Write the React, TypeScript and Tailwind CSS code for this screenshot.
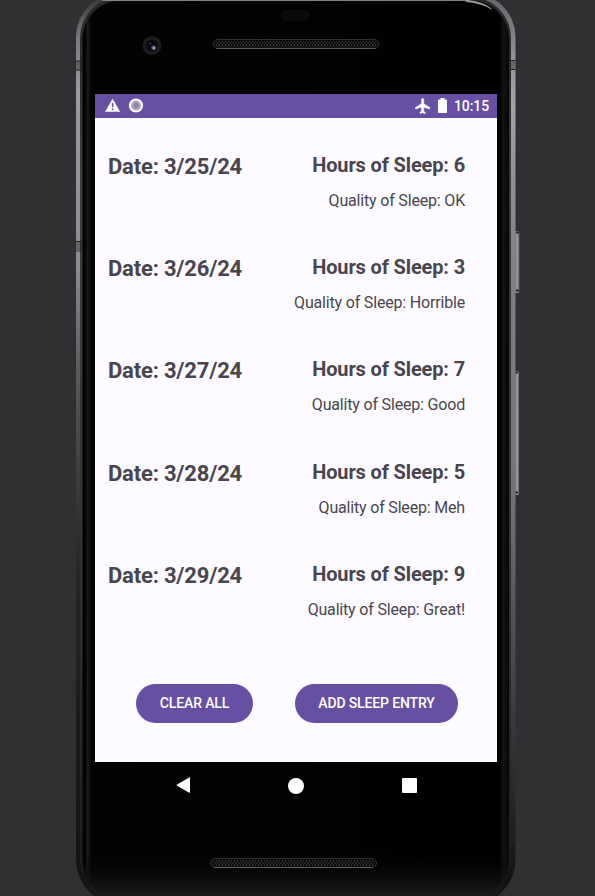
import React from "react";

const entries = [
  { date: "3/25/24", hours: 6, quality: "OK" },
  { date: "3/26/24", hours: 3, quality: "Horrible" },
  { date: "3/27/24", hours: 7, quality: "Good" },
  { date: "3/28/24", hours: 5, quality: "Meh" },
  { date: "3/29/24", hours: 9, quality: "Great!" },
];

function Speaker({ x, y }: { x: number; y: number }) {
  return (
    <g>
      <rect x={x + 0.5} y={y + 0.5} width="166" height="9" rx="4.5" fill="#0c0c0c" stroke="#303030" />
      <rect x={x + 2.5} y={y + 2} width="162" height="6.5" rx="3" fill="url(#mesh)" />
      <path d={`M${x + 4} ${y + 9.5}h159`} stroke="#5c5c5e" />
    </g>
  );
}

function DeviceFrame() {
  return (
    <svg className="absolute inset-0" width="595" height="896" viewBox="0 0 595 896">
      <defs>
        <linearGradient id="rimLeft" x1="0" y1="0" x2="0" y2="896" gradientUnits="userSpaceOnUse">
          <stop offset="0" stopColor="#3a3a3d" />
          <stop offset=".04" stopColor="#77777b" />
          <stop offset=".1" stopColor="#9a9a9f" />
          <stop offset=".3" stopColor="#8a8a8f" />
          <stop offset=".42" stopColor="#58585b" />
          <stop offset=".55" stopColor="#39393b" />
          <stop offset=".65" stopColor="#232324" />
          <stop offset="1" stopColor="#131314" />
        </linearGradient>
        <linearGradient id="rimRight" x1="0" y1="0" x2="0" y2="896" gradientUnits="userSpaceOnUse">
          <stop offset="0" stopColor="#67676b" />
          <stop offset=".07" stopColor="#96969b" />
          <stop offset=".12" stopColor="#a0a0a5" />
          <stop offset=".3" stopColor="#7e7e83" />
          <stop offset=".55" stopColor="#737378" />
          <stop offset=".7" stopColor="#505054" />
          <stop offset=".85" stopColor="#303033" />
          <stop offset="1" stopColor="#0e0e0f" />
        </linearGradient>
        <linearGradient id="inner" x1="0" y1="0" x2="0" y2="896" gradientUnits="userSpaceOnUse">
          <stop offset="0" stopColor="#27272a" />
          <stop offset=".2" stopColor="#3c3c3f" />
          <stop offset=".65" stopColor="#323234" />
          <stop offset="1" stopColor="#1c1c1d" />
        </linearGradient>
        <linearGradient id="glass" x1="82" y1="0" x2="510" y2="0" gradientUnits="userSpaceOnUse">
          <stop offset="0" stopColor="#020202" />
          <stop offset=".008" stopColor="#050505" />
          <stop offset=".013" stopColor="#1a1a1b" />
          <stop offset=".022" stopColor="#030303" />
          <stop offset=".975" stopColor="#000" />
          <stop offset=".985" stopColor="#131314" />
          <stop offset="1" stopColor="#040404" />
        </linearGradient>
        <linearGradient id="chin" x1="0" y1="848" x2="0" y2="896" gradientUnits="userSpaceOnUse">
          <stop offset="0" stopColor="#000" stopOpacity="0" />
          <stop offset="1" stopColor="#1c1c1c" />
        </linearGradient>
        <linearGradient id="key" x1="514" y1="0" x2="520" y2="0" gradientUnits="userSpaceOnUse">
          <stop offset="0" stopColor="#69696c" />
          <stop offset=".6" stopColor="#a09ca2" />
          <stop offset="1" stopColor="#302f31" />
        </linearGradient>
        <pattern id="mesh" width="3" height="4" patternUnits="userSpaceOnUse">
          <path d="M0 0h1v2H0zM1.5 2h1v2h-1z" fill="#343434" />
        </pattern>
      </defs>
      <rect x="513" y="231" width="7" height="62" rx="1.5" fill="url(#key)" />
      <rect x="513" y="371" width="6" height="124" rx="1.5" fill="url(#key)" />
      <path d="M516 232.500h3M516 290.500h3M515 372.500h3M515 492.500h3" stroke="#222" strokeWidth="2" />
      <path d="M296 -7H120A44 44 0 0 0 76 37V860A44 44 0 0 0 120 904H296Z" fill="url(#rimLeft)" />
      <path d="M295 -7H471.500A44 44 0 0 1 515.500 37V860A44 44 0 0 1 471.500 904H295Z" fill="url(#rimRight)" />
      <rect x="80" y="-3" width="431" height="904" rx="41" fill="url(#inner)" />
      <rect x="82.500" y="0.500" width="426.500" height="898" rx="38" fill="url(#glass)" />
      <path d="M102 .5H470" stroke="#818188" />
      <path d="M466 .5Q482 1 491.500 9Q482 3 466 1.500Z" stroke="#a5a5a8" strokeWidth=".7" fill="#aaa" />
      <rect x="83" y="846" width="426" height="52.500" rx="26" fill="url(#chin)" />
      <path d="M76 61h6v9h-6zM76 241h6v11h-6zM510 61h5.500v9H510zM510 833h5.500v9H510z" fill="#222" fillOpacity=".4" />
      <path d="M76 61h6M76 70h6M76 241.500h6M509.500 60.500h6M509.500 69.500h6M509.500 832.500h6M509.500 842.500h6" stroke="#222" />
      <rect x="281" y="10" width="29" height="11" rx="5.5" fill="#0a0a0a" />
      <circle cx="152" cy="45.5" r="9.5" fill="#1c1c1d" />
      <circle cx="152" cy="45.5" r="6" fill="#0b0b0e" />
      <circle cx="153.5" cy="47.5" r="2.3" fill="#51466f" />
      <circle cx="154" cy="48" r="1.5" fill="#a69bd0" />
      <circle cx="150.3" cy="43.5" r=".8" fill="#57506c" />
      <Speaker x={212.5} y={39} />
      <Speaker x={210} y={858} />
    </svg>
  );
}

function StatusBar() {
  return (
    <div className="flex h-[23.5px] shrink-0 items-center bg-[#674fa3] pr-[7px] pl-[10px] text-white">
      <svg className="-mt-px" width="16" height="14" viewBox="0 0 16 14">
        <path d="M7.6.7 15.1 13.8H.1Z" fill="#fff" />
        <path d="M7.6 5v4.3M7.6 10.6v1.6" stroke="#674fa3" strokeWidth="1.5" />
      </svg>
      <svg className="ml-[8px]" width="15" height="15" viewBox="0 0 15 15">
        <circle cx="7" cy="7.5" r="7.1" fill="#fff" />
        <circle cx="7" cy="7.5" r="4.9" fill="#aaa0cb" />
        <circle cx="7" cy="7.5" r="2.5" fill="#8d8796" />
      </svg>
      <svg className="ml-auto" width="18" height="18" viewBox="0 0 24 24">
        <path d="M21 16v-2l-8-5V3.500C13 2.670 12.330 2 11.500 2S10 2.670 10 3.500V9l-8 5v2l8-2.500V19l-2 1.500V22l3.500-1 3.500 1v-1.500L13 19v-5.500l8 2.500z" fill="#fff" stroke="#fff" strokeWidth=".7" />
      </svg>
      <svg className="ml-[6px]" width="9" height="15" viewBox="0 0 9 15">
        <path d="M2.5 0h4v1.500h1.700q.8 0 .8.800v11.900q0 .8-.8.800H.8q-.8 0-.8-.8V2.300q0-.8.8-.8h1.700z" fill="#fff" />
      </svg>
      <span className="ml-[7px] w-[36px] pt-px text-[14px] leading-none font-medium tracking-[-0.1px] whitespace-nowrap">10:15</span>
    </div>
  );
}

function NavBar() {
  return (
    <div className="flex h-[47px] items-center justify-between pr-[80px] pl-[80px]">
      <svg width="15" height="17" viewBox="0 0 15 17">
        <path d="M15 .9v14.300q0 .8-.8.500L2 8.800q-1-.7 0-1.400L14.200.5q.8-.4.800.4z" fill="#fff" />
      </svg>
      <div className="size-4 rounded-full bg-white" />
      <div className="size-[15px] rounded-[1px] bg-white" />
    </div>
  );
}

export default function App() {
  return (
    <div className="relative h-[896px] w-[595px] overflow-hidden bg-[#2e3032] font-['Roboto',sans-serif]">
      <DeviceFrame />
      <main className="relative pt-[94px] pl-[95px]">
        <div className="flex h-[668px] w-[402px] flex-col bg-[#fdfbff] text-[#49454f]">
          <StatusBar />
          <ul className="pt-[34px]">
            {entries.map((entry) => (
              <li key={entry.date} className="flex h-[102.400px] justify-between pr-[32px] pl-[13px] whitespace-nowrap">
                <h2 className="pt-[2px] text-[22px] leading-[26px] font-bold tracking-[-0.19px]">Date: {entry.date}</h2>
                <div className="text-right">
                  <h3 className="text-[20px] leading-[26px] font-bold tracking-[-0.14px]">Hours of Sleep: {entry.hours}</h3>
                  <p className="mt-[13px] text-[16px] leading-[20px] tracking-[-0.18px]">Quality of Sleep: {entry.quality}</p>
                </div>
              </li>
            ))}
          </ul>
          <div className="mt-[20.500px] flex gap-[42px] pl-[41px] text-[14px] font-medium tracking-[-0.14px] text-white">
            <button className="h-[39px] w-[117px] rounded-full bg-[#674fa3]">CLEAR ALL</button>
            <button className="h-[39px] w-[163px] rounded-full bg-[#674fa3]">ADD SLEEP ENTRY</button>
          </div>
        </div>
        <div className="w-[402px]">
          <NavBar />
        </div>
      </main>
    </div>
  );
}
